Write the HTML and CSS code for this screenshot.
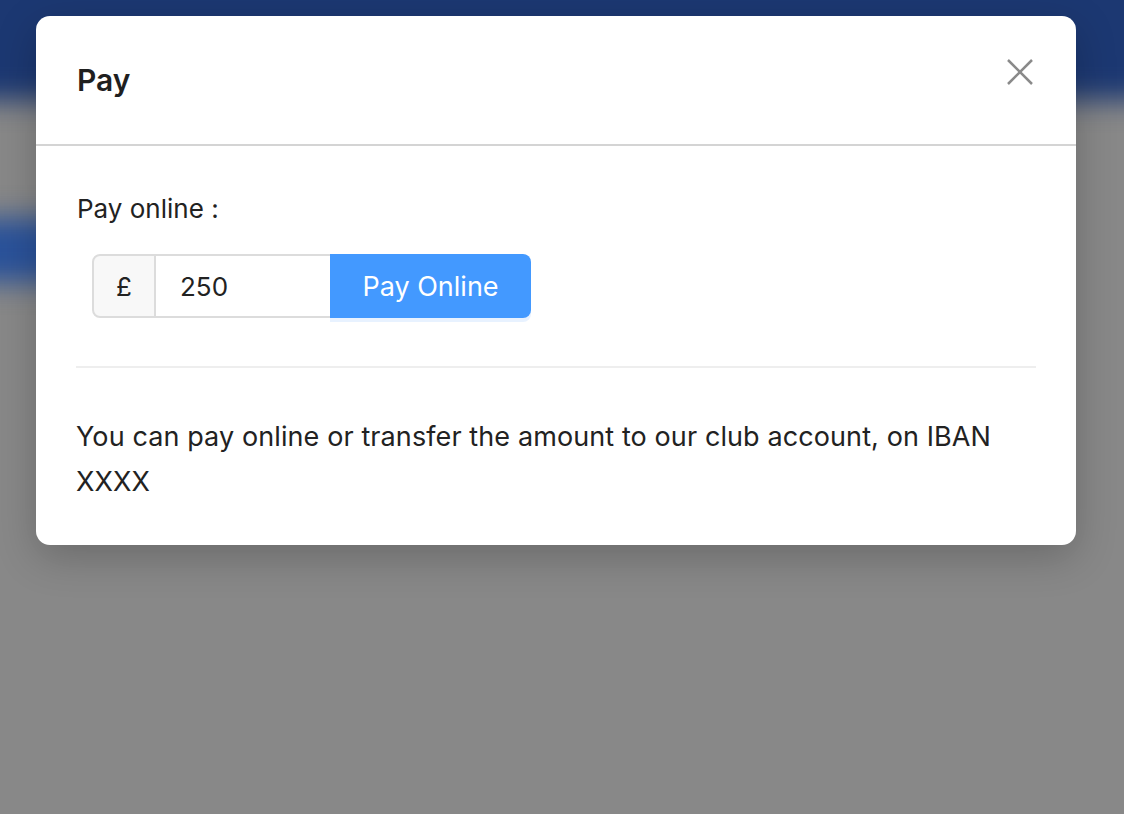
FILE: index.html
```html
<!DOCTYPE html>
<html>
<head>
<meta charset="UTF-8">
<title>Pay</title>
<link rel="stylesheet" href="styles.css">
</head>
<body>
	<div class="backdrop">
		<div class="backdrop-bar"></div>
		<div class="backdrop-strip"></div>
	</div>
	<div class="modal">
		<div class="modal-header">
			<h2 class="modal-title">Pay</h2>
			<a class="close">
				<svg width="26" height="26" viewBox="0 0 26 26">
					<path d="M1 1 L25 25 M25 1 L1 25" stroke="#8a8a8a" stroke-width="2.5" fill="none"/>
				</svg>
			</a>
		</div>
		<div class="modal-body">
			<div class="label">Pay online :</div>
			<div class="input-group">
				<span class="prefix">£</span>
				<input class="amount" type="text" value="250">
				<a class="button">Pay Online</a>
			</div>
			<hr class="divider">
			<p class="note">You can pay online or transfer the amount to our club account, on IBAN XXXX</p>
		</div>
	</div>
</body>
</html>
```

FILE: styles.css
```css
* {
	box-sizing: border-box;
}
html, body {
	margin: 0;
	height: 100%;
}
body {
	background: #888;
	font-family: Inter, "Noto Sans", sans-serif;
	color: #222;
	overflow: hidden;
	position: relative;
}
.backdrop {
	position: absolute;
	inset: -40px;
	filter: blur(14px);
}
.backdrop-bar {
	height: 140px;
	background: #1c3872;
}
.backdrop-strip {
	margin-top: 118px;
	height: 64px;
	width: 140px;
	background: #2a529a;
}
.modal {
	position: absolute;
	top: 16px;
	left: 36px;
	width: 1040px;
	background: #fff;
	border-radius: 14px;
	box-shadow: 0 12px 40px rgba(0, 0, 0, .22);
}
.modal-header {
	height: 130px;
	display: flex;
	align-items: center;
	justify-content: space-between;
	padding: 0 43px 0 41px;
	border-bottom: 2px solid #d4d4d4;
}
.modal-title {
	margin: 0;
	font-size: 30px;
	font-weight: 600;
	color: #1f1f1f;
}
.close {
	display: block;
	width: 26px;
	height: 26px;
	margin-top: -16px;
	cursor: pointer;
}
.modal-body {
	padding: 40px 40px 41px 40px;
}
.label {
	font-size: 26px;
	line-height: 45px;
	padding-left: 1px;
}
.input-group {
	display: flex;
	margin: 23px 0 0 16px;
	height: 64px;
	width: 439px;
}
.prefix {
	width: 64px;
	display: flex;
	align-items: center;
	justify-content: center;
	font-size: 26px;
	background: #f8f8f8;
	border: 2px solid #dcdcdc;
	border-radius: 8px 0 0 8px;
}
.amount {
	width: 174px;
	border: 2px solid #dcdcdc;
	border-left: 0;
	border-right: 0;
	padding: 0 0 0 24px;
	font: 26px Inter, "Noto Sans", sans-serif;
	color: #222;
	outline: none;
}
.button {
	flex: 1;
	display: flex;
	align-items: center;
	justify-content: center;
	background: #4399ff;
	color: #fff;
	font-size: 27px;
	border-radius: 0 8px 8px 0;
	box-shadow: 0 4px 0 #e8f2ff;
	cursor: pointer;
}
.divider {
	margin: 48px 0 0;
	border: 0;
	border-top: 2px solid #eee;
}
.note {
	margin: 46px 0 0;
	font-size: 27px;
	letter-spacing: 0.1px;
	line-height: 45px;
}
```
